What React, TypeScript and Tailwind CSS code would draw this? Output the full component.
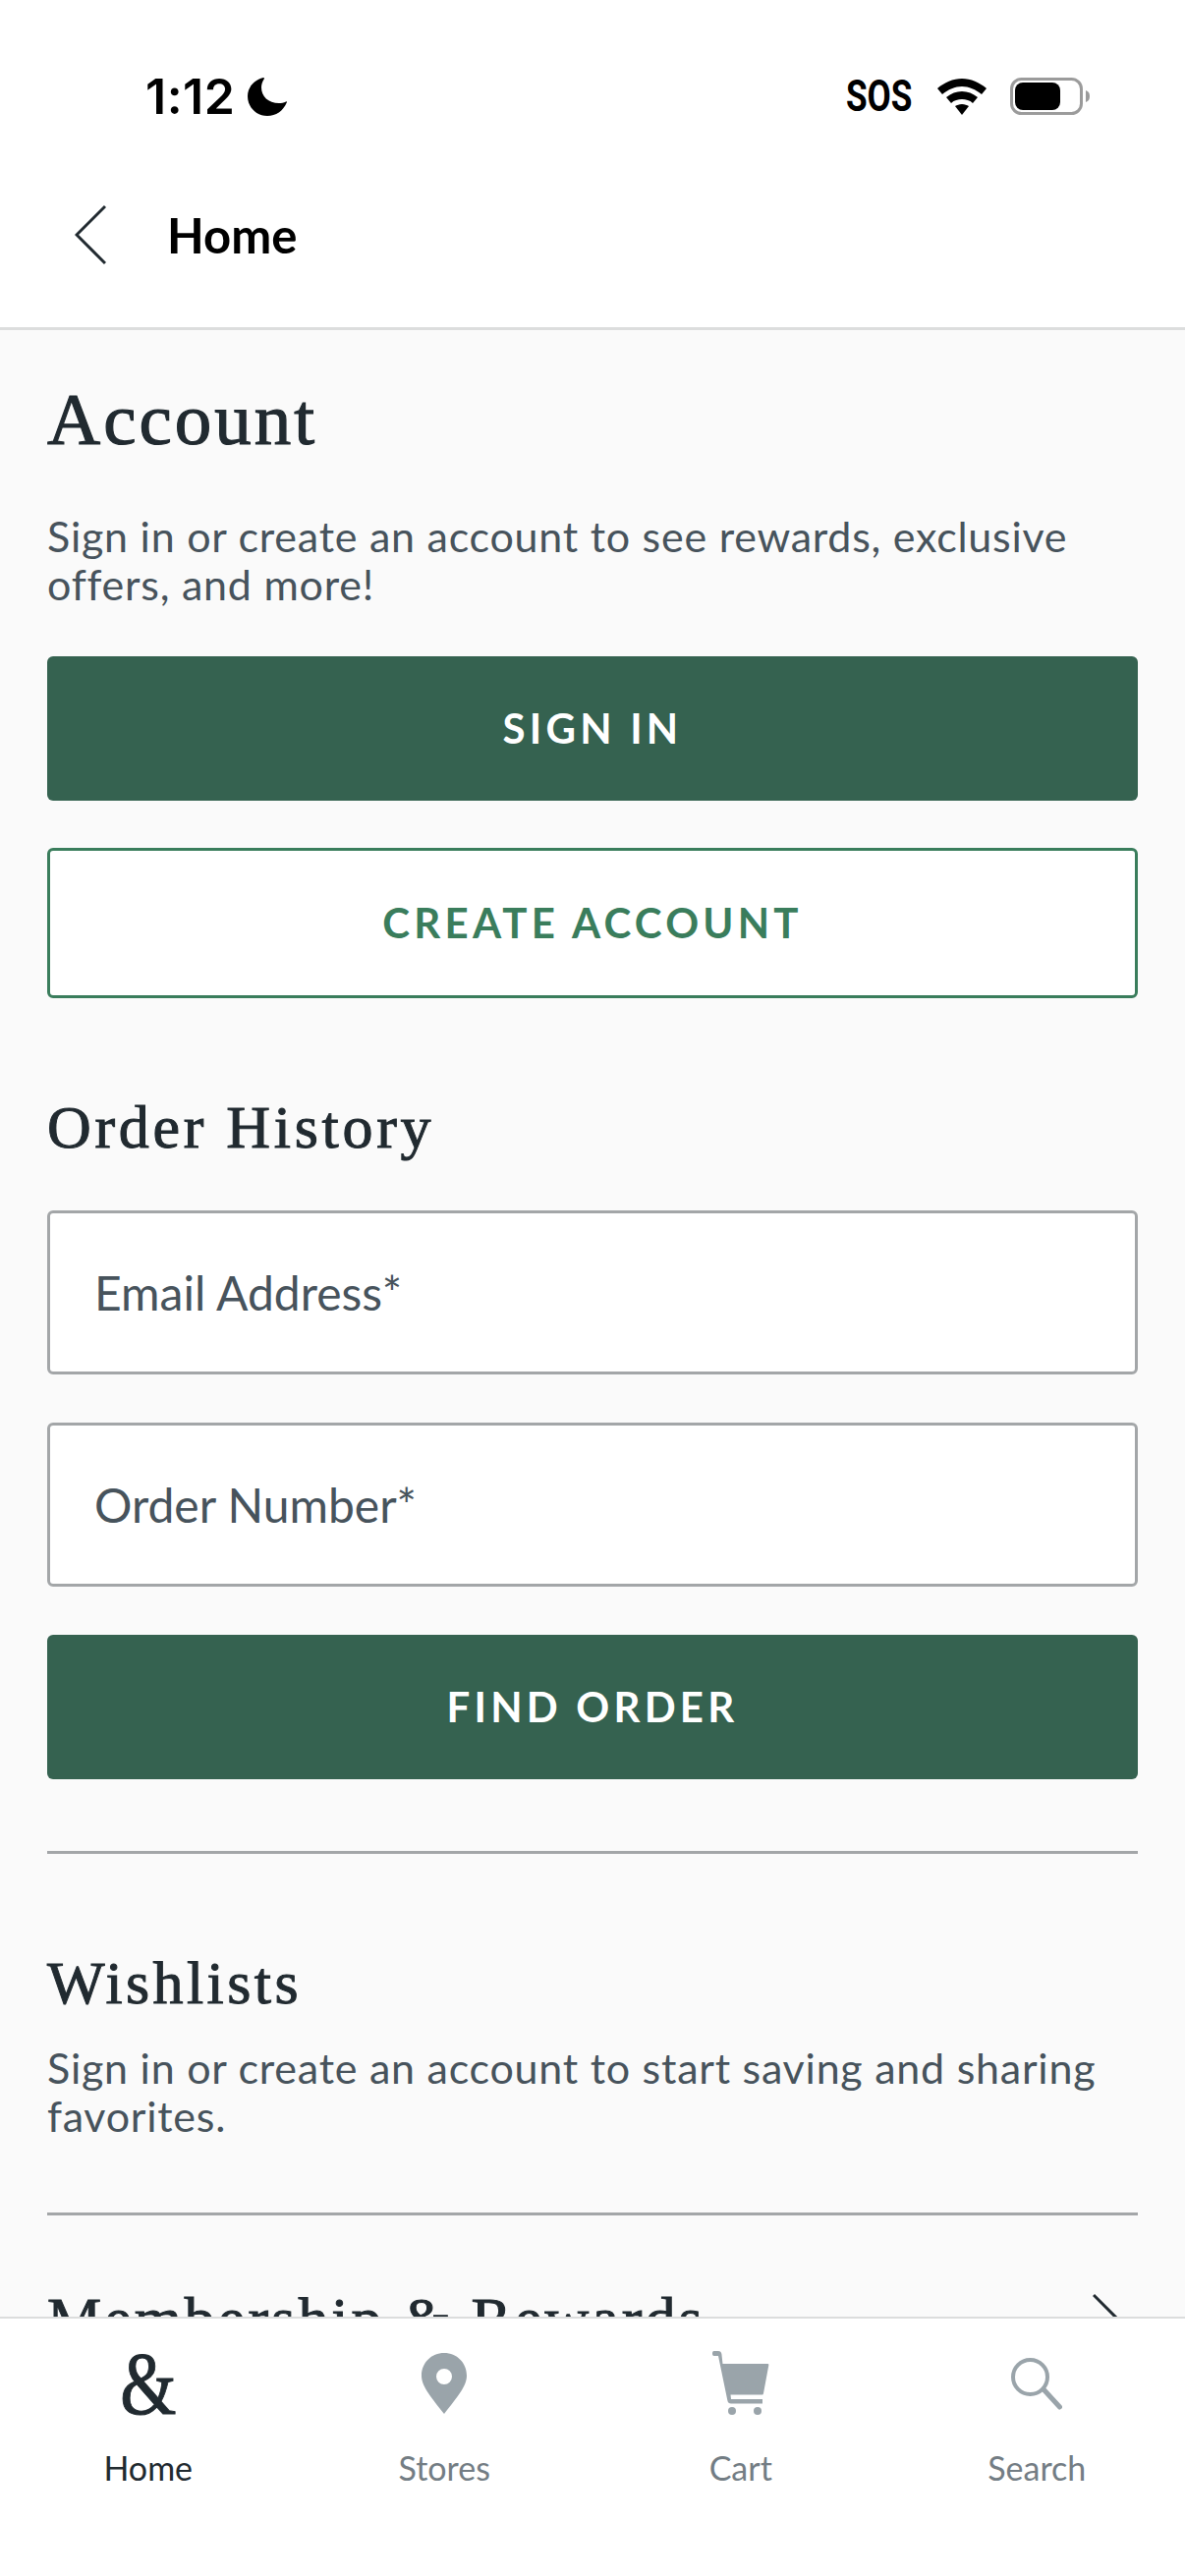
const sans = "font-['Lato','Noto_Sans',sans-serif]";
const serif = "font-['Liberation_Serif',serif]";

const PinIcon = () => (
  <svg width="46" height="62" viewBox="0 0 46 62" className="fill-[#9aa4aa]">
    <path fillRule="evenodd" d="M23 0C36 0 46 10 46 23c0 10-8 20-23 39C8 43 0 33 0 23 0 10 10 0 23 0Zm0 16a8 8 0 1 0 0 16 8 8 0 0 0 0-16Z" />
  </svg>
);

const CartIcon = () => (
  <svg width="58" height="66" viewBox="0 0 58 66" className="fill-[#9aa4aa]">
    <path d="M1.5 0h4.5c2 0 3 1 3.4 3L10.5 13H56c1 0 1.5.5 1.3 1.5L52 43c-.2 1-.6 1.5-1.5 1.5H18.5L19 49h32v4.5H19c-2 0-3.3-1-3.6-3L6 5H1.5c-2 0-2-5 0-5Z" />
    <circle cx="20" cy="61" r="4" />
    <circle cx="46" cy="61" r="4" />
  </svg>
);

const SearchIcon = () => (
  <svg width="52" height="53" viewBox="0 0 52 53" fill="none" className="stroke-[#9aa4aa]">
    <circle cx="19.5" cy="19.5" r="17.5" strokeWidth="4" />
    <path d="M33 32l16.5 18" strokeWidth="5" strokeLinecap="round" />
  </svg>
);

function TabItem({ label, active, icon }: { label: string; active?: boolean; icon: React.ReactNode }) {
  return (
    <div className="flex flex-col items-center">
      <div className="flex h-[72px] items-center justify-center">{icon}</div>
      <span className={`mt-[30px] text-[34px] leading-[40px] ${sans} ${active ? "text-[#212a30]" : "text-[#737d84]"}`}>
        {label}
      </span>
    </div>
  );
}

export default function App() {
  return (
    <div className={`flex h-[2622px] w-[1206px] flex-col overflow-hidden bg-white ${sans}`}>
      {/* status bar */}
      <div className="flex h-[166px] shrink-0 items-start justify-between pl-[148px] pr-[97px] pt-[70px]">
        <div className="flex items-center gap-[13px]">
          <span className="font-['Inter',sans-serif] text-[50px] font-semibold leading-[56px] tracking-[0.5px] text-black">1:12</span>
          <svg width="40" height="39" viewBox="0 0 40 39" className="fill-black">
            <path d="M16 0C5 3 0 11 0 19c0 11 9 20 20 20 9 0 16-5 20-14 0-.5-.5-1-1-.5-2 1-5 1.5-7 1.5C21 26 14 19 14 10c0-3 1-6 3-9 0-.5-.5-1-1-1Z" />
          </svg>
        </div>
        <div className="flex items-center">
          <span className="inline-block w-[68px] origin-left scale-x-[0.78] whitespace-nowrap font-['Roboto',sans-serif] text-[45px] font-bold leading-[56px] text-black">
            SOS
          </span>
          <svg width="50" height="37" viewBox="0 0 50 37" className="ml-[25px] fill-black">
            <path d="M25 0c9 0 18 4 25 10l-5 6C39 11 32 8 25 8S11 11 5 16l-5-6C7 4 16 0 25 0Z" />
            <path d="M25 13c6 0 11 2 16 6l-5 6c-3-3-7-4-11-4s-8 1-11 4l-5-6c5-4 10-6 16-6Z" />
            <path d="M25 26c3 0 5 1 7 2L25 37l-7-9c2-1 4-2 7-2Z" />
          </svg>
          <svg width="81" height="38" viewBox="0 0 81 38" className="ml-[24px]">
            <rect x="1.5" y="1.5" width="71" height="35" rx="10" fill="none" stroke="#9b9b9b" strokeWidth="3" />
            <rect x="5" y="5" width="46" height="28" rx="8" fill="#000" />
            <path d="M77 13c3 1 4 3 4 6s-1 5-4 6Z" fill="#9b9b9b" />
          </svg>
        </div>
      </div>

      {/* nav header */}
      <div className="flex h-[170px] shrink-0 items-start border-b-[3px] border-[#dcdddd] pl-[76px] pt-[42px]">
        <svg width="32" height="62" viewBox="0 0 32 62" fill="none" className="stroke-[#212a30]">
          <path d="M31 2L2 31l29 29" strokeWidth="3" />
        </svg>
        <span className="ml-[62px] mt-[2px] text-[49px] font-bold leading-[58px] text-black">Home</span>
      </div>

      {/* content */}
      <div className="min-h-0 flex-1 overflow-hidden bg-[#fafafa] px-[48px]">
        <h1 className={`mt-[47px] text-[75px] font-normal leading-[88px] tracking-[3px] text-[#212a30] [-webkit-text-stroke:1.2px_#212a30] ${serif}`}>Account</h1>
        <p className="mt-[50px] text-[43px] leading-[49px] tracking-[0.75px] text-[#47535c]">
          Sign in or create an account to see rewards, exclusive offers, and more!
        </p>
        <button className="mt-[49px] flex h-[147px] w-full items-center justify-center rounded-[6px] bg-[#356250] text-[42px] font-bold tracking-[4.2px] text-white">
          SIGN IN
        </button>
        <button className="mt-[48px] flex h-[153px] w-full items-center justify-center rounded-[6px] border-[3px] border-[#3a7d5c] bg-white text-[42px] font-bold tracking-[4.2px] text-[#3a7d5c]">
          CREATE ACCOUNT
        </button>

        <h2 className={`mt-[95px] text-[62px] font-normal leading-[72px] tracking-[3.7px] text-[#212a30] [-webkit-text-stroke:1px_#212a30] ${serif}`}>Order History</h2>
        <div className="mt-[49px] flex h-[167px] items-center rounded-[6px] border-[3px] border-[#a3a6a8] bg-white pl-[45px] text-[48px] text-[#47535c]">
          Email Address*
        </div>
        <div className="mt-[49px] flex h-[167px] items-center rounded-[6px] border-[3px] border-[#a3a6a8] bg-white pl-[45px] text-[48px] text-[#47535c]">
          Order Number*
        </div>
        <button className="mt-[49px] flex h-[147px] w-full items-center justify-center rounded-[6px] bg-[#356250] text-[42px] font-bold tracking-[4.2px] text-white">
          FIND ORDER
        </button>
        <div className="mt-[73px] h-[3px] bg-[#a3a6a8]" />

        <h2 className={`mt-[95px] text-[62px] font-normal leading-[72px] tracking-[3.4px] text-[#212a30] [-webkit-text-stroke:1px_#212a30] ${serif}`}>Wishlists</h2>
        <p className="mt-[26px] text-[43px] leading-[49px] tracking-[0.75px] text-[#47535c]">
          Sign in or create an account to start saving and sharing favorites.
        </p>
        <div className="mt-[74px] h-[3px] bg-[#a3a6a8]" />

        <div className="mt-[69px] flex items-start justify-between">
          <h2 className={`text-[62px] font-normal leading-[72px] tracking-[3px] text-[#212a30] [-webkit-text-stroke:1px_#212a30] ${serif}`}>Membership &amp; Rewards</h2>
          <svg width="32" height="62" viewBox="0 0 32 62" fill="none" className="mr-[14px] mt-[10px] stroke-[#212a30]">
            <path d="M1 2l29 29L1 60" strokeWidth="3" />
          </svg>
        </div>
      </div>

      {/* tab bar */}
      <div className="grid h-[264px] shrink-0 grid-cols-4 border-t-[2px] border-[#dcdddd] bg-white pt-[30px]">
        <TabItem label="Home" active icon={<span className={`inline-block scale-x-[0.8] text-[92px] leading-[72px] text-[#212a30] [-webkit-text-stroke:1px_#212a30] ${serif}`}>&amp;</span>} />
        <TabItem label="Stores" icon={<PinIcon />} />
        <TabItem label="Cart" icon={<CartIcon />} />
        <TabItem label="Search" icon={<SearchIcon />} />
      </div>
    </div>
  );
}
